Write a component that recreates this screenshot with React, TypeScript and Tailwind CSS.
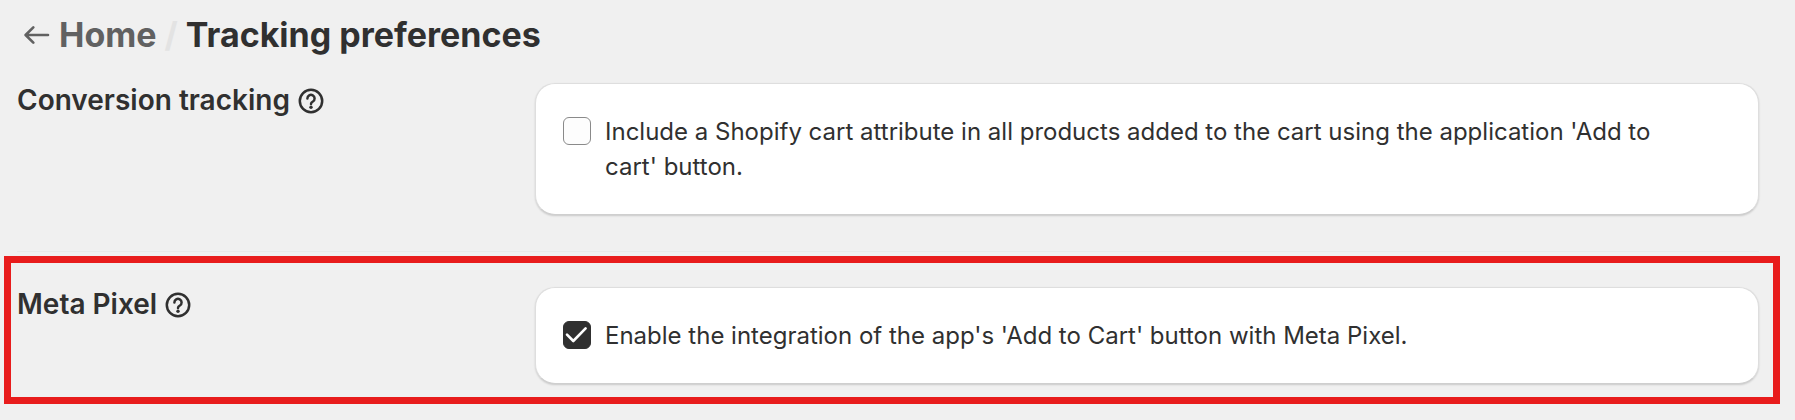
import { ReactNode, useId, useState } from "react";
import cx from "clsx";

const ArrowLeftIcon = () => (
  <svg
    viewBox="0 0 26 20"
    className="h-5 w-[26px]"
    fill="none"
    stroke="currentColor"
    strokeWidth="2.6"
    strokeLinecap="round"
    strokeLinejoin="round"
    aria-hidden="true"
  >
    <path d="M24 10H2M9.3 2.3 1.6 10l7.7 7.7" />
  </svg>
);

const HelpIcon = () => (
  <svg viewBox="0 0 26 26" className="size-[26px]" fill="none" aria-hidden="true">
    <circle cx="13" cy="13" r="11.2" stroke="currentColor" strokeWidth="2.5" />
    <path
      d="M9.4 10.4a3.6 3.6 0 1 1 5.5 3.1c-1.2.7-1.9 1.2-1.9 2.4"
      stroke="currentColor"
      strokeWidth="2.5"
      strokeLinecap="round"
    />
    <circle cx="13" cy="19.2" r="1.7" fill="currentColor" />
  </svg>
);

interface CheckboxProps {
  label: string;
  defaultChecked?: boolean;
}

const Checkbox: React.FC<CheckboxProps> = ({ label, defaultChecked = false }) => {
  const id = useId();
  const [checked, setChecked] = useState(defaultChecked);

  return (
    <div className="flex items-start gap-[14px]">
      <span className="grid shrink-0 pt-[3px]">
        <input
          id={id}
          type="checkbox"
          checked={checked}
          onChange={(e) => setChecked(e.target.checked)}
          className={cx(
            "col-start-1 row-start-1 size-7 appearance-none rounded-md border",
            checked
              ? "border-[#303030] bg-[#303030]"
              : "border-[#8a8a8a] bg-[#fdfdfd]"
          )}
        />
        {checked && (
          <svg
            viewBox="0 0 28 28"
            className="pointer-events-none col-start-1 row-start-1 size-7"
            fill="none"
            stroke="#fff"
            strokeWidth="2.6"
            strokeLinecap="round"
            strokeLinejoin="round"
            aria-hidden="true"
          >
            <path d="M4 13.6l6.3 6.4L22.6 7.4" />
          </svg>
        )}
      </span>
      <label htmlFor={id} className="text-2xl leading-[35px]">
        {label}
      </label>
    </div>
  );
};

interface SettingsRowProps {
  title: string;
  children: ReactNode;
  className?: string;
}

const SettingsRow: React.FC<SettingsRowProps> = ({
  title,
  children,
  className,
}) => (
  <section className={cx("grid grid-cols-[5fr_12fr] gap-2", className)}>
    <div className="flex items-center gap-2 self-start">
      <h2 className="text-[28px] leading-[35px] font-semibold">{title}</h2>
      <button type="button" aria-label={`About ${title}`}>
        <HelpIcon />
      </button>
    </div>
    <div className="rounded-[20px] border border-[#dedede] border-b-[#cfcfcf] bg-white py-[30px] pr-16 pl-[27px] shadow-[0_1px_2px_rgba(0,0,0,0.16)]">
      {children}
    </div>
  </section>
);

export default function App() {
  return (
    <main className="min-h-screen bg-[#f0f0f0] pr-[15px] pl-1 font-['Inter',sans-serif] text-[#303030]">
      <nav className="flex items-center pt-[13px] pl-5 text-[34px] leading-[44px] font-bold">
        <a href="#home" className="flex items-center gap-[9px] text-[#616161]">
          <ArrowLeftIcon />
          Home
        </a>
        <span className="px-2 text-[#e3e3e3]">/</span>
        <h1>Tracking preferences</h1>
      </nav>

      <SettingsRow
        title="Conversion tracking"
        className="mt-[26px] pr-[21px] pl-[13px]"
      >
        <Checkbox label="Include a Shopify cart attribute in all products added to the cart using the application 'Add to cart' button." />
      </SettingsRow>

      <hr className="mt-9 mr-[21px] ml-[13px] border-[#e8e8e8]" />

      <SettingsRow
        title="Meta Pixel"
        className="mt-1 border-7 border-[#e81c1c] pt-6 pr-[14px] pb-[13px] pl-[6px]"
      >
        <Checkbox
          label="Enable the integration of the app's 'Add to Cart' button with Meta Pixel."
          defaultChecked
        />
      </SettingsRow>
    </main>
  );
}
